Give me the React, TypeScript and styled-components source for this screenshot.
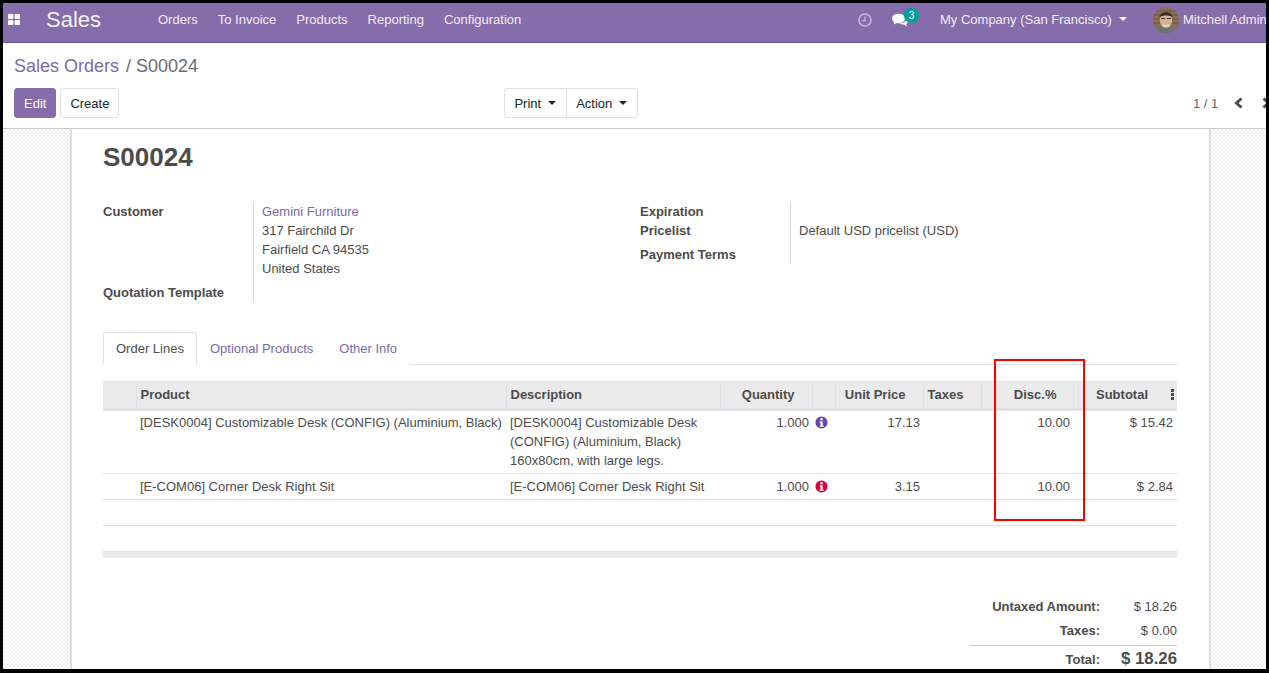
import styled, { createGlobalStyle } from 'styled-components'

const navPurple = '#856cab'
const linkPurple = '#7c6ba8'
const ink = '#4c4c4c'

const GlobalStyle = createGlobalStyle`
  html, body {
    margin: 0;
    padding: 0;
    height: 100%;
    overflow: hidden;
    background: #000;
  }
  #root {
    height: 100%;
  }
`

const Stage = styled.div`
  position: relative;
  width: 1269px;
  height: 673px;
`

const Frame = styled.div`
  box-sizing: border-box;
  width: 1269px;
  height: 673px;
  border-style: solid;
  border-color: #000;
  border-width: 3px 3px 4px 3px;
  display: flex;
  flex-direction: column;
  overflow: hidden;
  background: #fff;
  color: ${ink};
  font: 13px/19px "Liberation Sans", Arial, sans-serif;
`

const NavBar = styled.header`
  flex: 0 0 40px;
  box-sizing: border-box;
  height: 40px;
  display: flex;
  align-items: center;
  background: ${navPurple};
  border-bottom: 1px solid #6f5598;
  color: #fff;
  white-space: nowrap;
  padding: 0 0 6px 5px;
`

const AppsIcon = styled.svg`
  width: 12px;
  height: 11px;
  flex: none;
  fill: #fff;
`

const BrandName = styled.span`
  font-size: 22px;
  margin-left: 26px;
  width: 112px;
  flex: none;
  color: #f4f1f8;
`

const MenuItem = styled.span`
  margin-right: 20px;
  color: #f1edf6;
`

const NavRight = styled.div`
  margin-left: auto;
  display: flex;
  align-items: center;
  width: 408px;
  flex: none;
  overflow: hidden;
  height: 100%;
`

const ClockIcon = styled.svg`
  width: 14px;
  height: 14px;
  flex: none;
`

const ChatWrap = styled.span`
  position: relative;
  display: block;
  width: 16px;
  height: 14px;
  margin-left: 20px;
  flex: none;
`

const Badge = styled.span`
  position: absolute;
  left: 12px;
  top: -5px;
  width: 15px;
  height: 15px;
  border-radius: 50%;
  background: #00a09d;
  color: #fff;
  font-size: 10px;
  line-height: 15px;
  text-align: center;
`

const CompanyName = styled.span`
  margin-left: 32px;
  color: #f1edf6;
`

const Caret = styled.span<{ $color?: string }>`
  display: inline-block;
  width: 0;
  height: 0;
  margin-left: 7px;
  vertical-align: 3px;
  border-top: 4px solid ${(p) => p.$color ?? '#fff'};
  border-left: 4px solid transparent;
  border-right: 4px solid transparent;
`

const Avatar = styled.svg`
  width: 26px;
  height: 26px;
  flex: none;
  margin-left: 26px;
  border-radius: 50%;
`

const UserName = styled.span`
  margin-left: 4px;
  color: #f1edf6;
`

const ControlPanel = styled.div`
  flex: 0 0 86px;
  box-sizing: border-box;
  height: 86px;
  border-bottom: 1px solid #c9c9d0;
  padding: 11px 12px 0 11px;
  display: flex;
  flex-direction: column;
`

const Breadcrumb = styled.div`
  font-size: 18px;
  line-height: 24px;
  color: #6c6c6c;
`

const CrumbLink = styled.span`
  color: ${linkPurple};
  margin-right: 2px;
`

const ButtonRow = styled.div`
  margin-top: 10px;
  display: flex;
  align-items: center;
  height: 30px;
`

const Button = styled.span<{ $primary?: boolean }>`
  box-sizing: border-box;
  height: 30px;
  display: inline-flex;
  align-items: center;
  padding: 0 9px;
  border-radius: 3px;
  border: 1px solid ${(p) => (p.$primary ? navPurple : '#dee2e6')};
  background: ${(p) => (p.$primary ? navPurple : '#fff')};
  color: ${(p) => (p.$primary ? '#fff' : '#212529')};
  margin-right: 4px;
`

const ButtonGroup = styled.div`
  display: flex;
  margin-left: 381px;
`

const GroupButton = styled.span`
  box-sizing: border-box;
  height: 30px;
  display: inline-flex;
  align-items: center;
  padding: 0 10px 0 9px;
  border: 1px solid #dee2e6;
  color: #212529;
  &:first-child {
    border-radius: 3px 0 0 3px;
    border-right: 0;
  }
  &:last-child {
    border-radius: 0 3px 3px 0;
  }
`

const Pager = styled.div`
  margin-left: auto;
  display: flex;
  align-items: center;
  color: #666;
  margin-right: -14px;
  width: 75px;
  overflow: hidden;
  flex: none;
  white-space: nowrap;
`

const PagerIcon = styled.svg`
  width: 12px;
  height: 12px;
  flex: none;
  margin-left: 15px;
  stroke: #4c4c4c;
  stroke-width: 3;
  fill: none;
`

const Content = styled.main`
  flex: 1;
  min-height: 0;
  overflow: hidden;
  display: flex;
  background-color: #fff;
  background-image: conic-gradient(#f0f0f0 25%, #fff 0 50%, #f0f0f0 0 75%, #fff 0);
  background-size: 4px 4px;
`

const Sheet = styled.section`
  box-sizing: border-box;
  width: 1141px;
  margin-left: 67px;
  flex: none;
  background: #fff;
  border-left: 2px solid #dcdce1;
  border-right: 2px solid #dcdce1;
  padding: 13px 32px 0 31px;
`

const Title = styled.h1`
  margin: 0;
  font-size: 26px;
  line-height: 31px;
  font-weight: 700;
  color: #4c4c4c;
`

const FormGrid = styled.div`
  margin-top: 29px;
  display: flex;
  height: 100px;
`

const FormLeft = styled.div`
  width: 150px;
  flex: none;
  display: flex;
  flex-direction: column;
  justify-content: space-between;
  height: 100%;
  border-right: 1px solid #d8d8dc;
  font-weight: 700;
`

const Address = styled.div`
  width: 378px;
  flex: none;
  padding-left: 8px;
`

const AddressLink = styled.div`
  color: ${linkPurple};
`

const FormRight = styled.div`
  width: 151px;
  flex: none;
  box-sizing: border-box;
  height: 62px;
  border-right: 1px solid #d8d8dc;
  font-weight: 700;
`

const PaymentLabel = styled.div`
  margin-top: 5px;
`

const FieldLabel = styled.div`
  height: 19px;
`

const Pricelist = styled.div`
  padding: 19px 0 0 8px;
`

const TabBar = styled.div`
  margin-top: 30px;
  display: flex;
  height: 32px;
  border-bottom: 1px solid #dee2e6;
`

const Tab = styled.div<{ $active?: boolean }>`
  box-sizing: border-box;
  height: 33px;
  padding: 6px 12px 0;
  color: ${(p) => (p.$active ? ink : linkPurple)};
  background: #fff;
  border: 1px solid ${(p) => (p.$active ? '#dee2e6' : 'transparent')};
  border-bottom-color: ${(p) => (p.$active ? '#fff' : 'transparent')};
  border-radius: 3px 3px 0 0;
`

const LinesTable = styled.table`
  margin-top: 16px;
  width: 1074px;
  border-collapse: collapse;
  table-layout: fixed;
`

const HeadCell = styled.th<{ $align?: string; $pad?: number }>`
  box-sizing: border-box;
  height: 28px;
  padding: 0 ${(p) => p.$pad ?? 4}px 2px 4px;
  background: #ebebeb;
  border-top: 1px solid #dee2e6;
  border-bottom: 3px solid #dee2e6;
  border-left: 1px solid #dee2e6;
  font-weight: 700;
  text-align: ${(p) => p.$align ?? 'left'};
  white-space: nowrap;
  position: relative;
  &:first-child {
    border-left: 0;
  }
`

const Row = styled.tr<{ $tall?: boolean }>`
  td {
    padding-top: ${(p) => (p.$tall ? 2 : 3)}px;
  }
`

const Cell = styled.td<{ $align?: string; $h?: number; $pad?: number }>`
  box-sizing: border-box;
  height: ${(p) => p.$h ?? 26}px;
  padding: 3px ${(p) => p.$pad ?? 4}px 0 4px;
  vertical-align: top;
  text-align: ${(p) => p.$align ?? 'left'};
  border-bottom: 1px solid #dee2e6;
`

const ColumnMenu = styled.span`
  position: absolute;
  right: 3px;
  top: 7px;
  display: flex;
  flex-direction: column;
  gap: 1px;
`

const MenuDot = styled.i`
  display: block;
  width: 3px;
  height: 3px;
  background: #4c4c4c;
`

const InfoIcon = styled.svg`
  display: block;
  width: 13px;
  height: 13px;
  margin-top: 3px;
  margin-left: -1px;
`

const Spacer = styled.div`
  margin-top: 25px;
  height: 7px;
  box-sizing: border-box;
  background: #ebebeb;
  border-top: 1px solid #dee2e6;
`

const Totals = styled.div`
  margin: 39px 0 0 auto;
  width: 207px;
`

const TotalRow = styled.div<{ $top?: boolean }>`
  display: flex;
  justify-content: flex-end;
  align-items: baseline;
  height: 24px;
  ${(p) => p.$top && 'border-top: 1px solid #ccc; padding-top: 3px;'}
`

const TotalLabel = styled.span`
  font-weight: 700;
  margin-right: auto;
  width: 130px;
  text-align: right;
`

const TotalValue = styled.span<{ $big?: boolean }>`
  ${(p) => p.$big && 'font-size: 16.8px; font-weight: 700;'}
`

const Highlight = styled.div`
  position: absolute;
  left: 994px;
  top: 359px;
  width: 91px;
  height: 162px;
  box-sizing: border-box;
  border: 2px solid #f00;
  pointer-events: none;
`

type Line = {
  product: string
  description: string[]
  unitPrice: string
  subtotal: string
  infoColor: string
  height: number
}

const lines: Line[] = [
  {
    product: '[DESK0004] Customizable Desk (CONFIG) (Aluminium, Black)',
    description: ['[DESK0004] Customizable Desk', '(CONFIG) (Aluminium, Black)', '160x80cm, with large legs.'],
    unitPrice: '17.13',
    subtotal: '$ 15.42',
    infoColor: '#6a45a6',
    height: 64,
  },
  {
    product: '[E-COM06] Corner Desk Right Sit',
    description: ['[E-COM06] Corner Desk Right Sit'],
    unitPrice: '3.15',
    subtotal: '$ 2.84',
    infoColor: '#d0043c',
    height: 26,
  },
]

const columnWidths = [33, 370, 214, 92, 23, 88, 58, 92, 104]

function Info({ color }: { color: string }) {
  return (
    <InfoIcon viewBox="0 0 14 14">
      <circle cx="7" cy="7" r="6.5" fill={color} />
      <rect x="5.8" y="2.4" width="2.5" height="2.3" fill="#fff" />
      <path d="M5 5.8h3.3v4.4H9.3v1.4H5v-1.400h1V7.200H5z" fill="#fff" />
    </InfoIcon>
  )
}

function App() {
  return (
    <>
      <GlobalStyle />
      <Stage>
        <Frame>
          <NavBar>
            <AppsIcon viewBox="0 0 12 11">
              <rect x="0" y="0" width="5.4" height="5" rx="0.8" />
              <rect x="6.6" y="0" width="5.4" height="5" rx="0.8" />
              <rect x="0" y="6" width="5.4" height="5" rx="0.8" />
              <rect x="6.6" y="6" width="5.4" height="5" rx="0.8" />
            </AppsIcon>
            <BrandName>Sales</BrandName>
            <MenuItem>Orders</MenuItem>
            <MenuItem>To Invoice</MenuItem>
            <MenuItem>Products</MenuItem>
            <MenuItem>Reporting</MenuItem>
            <MenuItem>Configuration</MenuItem>
            <NavRight>
              <ClockIcon viewBox="0 0 14 14" fill="none" stroke="#c4b8da" strokeWidth="1.6">
                <circle cx="7" cy="7" r="6" />
                <path d="M7 3.5V7.6H4.4" strokeWidth="1.2" />
              </ClockIcon>
              <ChatWrap>
                <svg viewBox="0 0 16 14" width="16" height="14" fill="#fff">
                  <ellipse cx="6.5" cy="5.5" rx="6.5" ry="4.8" />
                  <path d="M2.5 8 1.5 11.5 6 9.5z" />
                  <path d="M14.5 5.2c1 .9 1.5 1.8 1.5 2.900 0 1.200-.7 2.200-1.800 2.900l.8 2.400-3.200-1.800c-1.700.1-3.300-.4-4.300-1.300 3.800 0 7.400-1.700 7-5.100z" />
                </svg>
                <Badge>3</Badge>
              </ChatWrap>
              <CompanyName>
                My Company (San Francisco)
                <Caret />
              </CompanyName>
              <Avatar viewBox="0 0 26 26">
                <rect width="26" height="26" fill="#8a7056" />
                <path d="M0 4h26M0 8h26M0 12h26M0 16h26" stroke="#6d5540" strokeWidth="1" />
                <path d="M3 26c1-6 6-7 10-6 4-1 9 0 10 6z" fill="#66756f" />
                <ellipse cx="13" cy="13.5" rx="6.2" ry="7.5" fill="#d6b097" />
                <path d="M6.5 10c0-6.500 13-6.500 13 0-3-2-9.500-2-13 0z" fill="#3b2d25" />
                <path d="M8 11.5h4.200M13.800 11.500H18" stroke="#40332c" strokeWidth="1.2" />
                <path d="M9.5 17c2 1.800 5 1.800 7 0l-1 2.200h-5z" fill="#f3ece4" />
              </Avatar>
              <UserName>Mitchell Admin</UserName>
            </NavRight>
          </NavBar>
          <ControlPanel>
            <Breadcrumb>
              <CrumbLink>Sales Orders</CrumbLink> / S00024
            </Breadcrumb>
            <ButtonRow>
              <Button $primary>Edit</Button>
              <Button>Create</Button>
              <ButtonGroup>
                <GroupButton>
                  Print
                  <Caret $color="#212529" />
                </GroupButton>
                <GroupButton>
                  Action
                  <Caret $color="#212529" />
                </GroupButton>
              </ButtonGroup>
              <Pager>
                1 / 1
                <PagerIcon viewBox="0 0 12 12">
                  <path d="M8.5 1.5 3.5 6l5 4.5" />
                </PagerIcon>
                <PagerIcon viewBox="0 0 12 12">
                  <path d="M3.5 1.5 8.5 6l-5 4.5" />
                </PagerIcon>
              </Pager>
            </ButtonRow>
          </ControlPanel>
          <Content>
            <Sheet>
              <Title>S00024</Title>
              <FormGrid>
                <FormLeft>
                  <div>Customer</div>
                  <div>Quotation Template</div>
                </FormLeft>
                <Address>
                  <AddressLink>Gemini Furniture</AddressLink>
                  <div>317 Fairchild Dr</div>
                  <div>Fairfield CA 94535</div>
                  <div>United States</div>
                </Address>
                <FormRight>
                  <FieldLabel>Expiration</FieldLabel>
                  <FieldLabel>Pricelist</FieldLabel>
                  <PaymentLabel>Payment Terms</PaymentLabel>
                </FormRight>
                <Pricelist>Default USD pricelist (USD)</Pricelist>
              </FormGrid>
              <TabBar>
                <Tab $active>Order Lines</Tab>
                <Tab>Optional Products</Tab>
                <Tab>Other Info</Tab>
              </TabBar>
              <LinesTable>
                <colgroup>
                  {columnWidths.map((width, i) => (
                    <col key={i} width={width} />
                  ))}
                </colgroup>
                <thead>
                  <tr>
                    <HeadCell />
                    <HeadCell>Product</HeadCell>
                    <HeadCell>Description</HeadCell>
                    <HeadCell $align="right" $pad={17}>
                      Quantity
                    </HeadCell>
                    <HeadCell />
                    <HeadCell $align="right" $pad={17}>
                      Unit Price
                    </HeadCell>
                    <HeadCell>Taxes</HeadCell>
                    <HeadCell $align="right" $pad={16}>
                      Disc.%
                    </HeadCell>
                    <HeadCell $align="right" $pad={29}>
                      Subtotal
                      <ColumnMenu>
                        <MenuDot />
                        <MenuDot />
                        <MenuDot />
                      </ColumnMenu>
                    </HeadCell>
                  </tr>
                </thead>
                <tbody>
                  {lines.map((line) => (
                    <Row key={line.product} $tall={line.height > 26}>
                      <Cell $h={line.height} />
                      <Cell>{line.product}</Cell>
                      <Cell>
                        {line.description.map((text) => (
                          <div key={text}>{text}</div>
                        ))}
                      </Cell>
                      <Cell $align="right" $pad={3}>
                        1.000
                      </Cell>
                      <Cell>
                        <Info color={line.infoColor} />
                      </Cell>
                      <Cell $align="right" $pad={3}>
                        {line.unitPrice}
                      </Cell>
                      <Cell />
                      <Cell $align="right" $pad={3}>
                        10.00
                      </Cell>
                      <Cell $align="right">{line.subtotal}</Cell>
                    </Row>
                  ))}
                  <tr>
                    <Cell colSpan={9} />
                  </tr>
                </tbody>
              </LinesTable>
              <Spacer />
              <Totals>
                <TotalRow>
                  <TotalLabel>Untaxed Amount:</TotalLabel>
                  <TotalValue>$ 18.26</TotalValue>
                </TotalRow>
                <TotalRow>
                  <TotalLabel>Taxes:</TotalLabel>
                  <TotalValue>$ 0.00</TotalValue>
                </TotalRow>
                <TotalRow $top>
                  <TotalLabel>Total:</TotalLabel>
                  <TotalValue $big>$ 18.26</TotalValue>
                </TotalRow>
              </Totals>
            </Sheet>
          </Content>
        </Frame>
        <Highlight />
      </Stage>
    </>
  )
}

export default App
